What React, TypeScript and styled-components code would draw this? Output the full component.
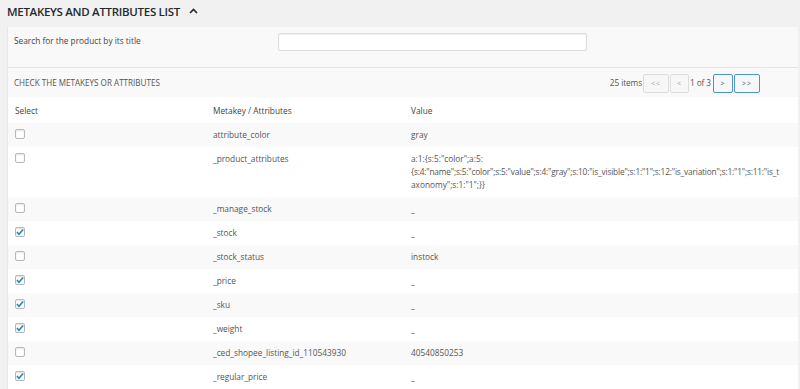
import React from "react"
import styled, { createGlobalStyle } from "styled-components"

type Row = { key: string; value: string[]; checked: boolean }

const rows: Row[] = [
  { key: "attribute_color", value: ["gray"], checked: false },
  {
    key: "_product_attributes",
    value: [
      'a:1:{s:5:"color";a:5:',
      '{s:4:"name";s:5:"color";s:5:"value";s:4:"gray";s:10:"is_visible";s:1:"1";s:12:"is_variation";s:1:"1";s:11:"is_t',
      'axonomy";s:1:"1";}}',
    ],
    checked: false,
  },
  { key: "_manage_stock", value: ["_"], checked: false },
  { key: "_stock", value: ["_"], checked: true },
  { key: "_stock_status", value: ["instock"], checked: false },
  { key: "_price", value: ["_"], checked: true },
  { key: "_sku", value: ["_"], checked: true },
  { key: "_weight", value: ["_"], checked: true },
  { key: "_ced_shopee_listing_id_110543930", value: ["40540850253"], checked: false },
  { key: "_regular_price", value: ["_"], checked: true },
]

const Check = () => (
  <svg width="9" height="8" viewBox="0 0 9 8">
    <path d="M1 4.2 L3.4 6.6 L8 1.2" fill="none" stroke="#1e8cbe" strokeWidth="1.8" />
  </svg>
)

export default function App() {
  return (
    <>
      <GlobalStyle />
      <S.Page>
        <S.Heading>
          METAKEYS AND ATTRIBUTES LIST
          <svg width="9" height="6" viewBox="0 0 9 6">
            <path d="M1 5 L4.5 1.5 L8 5" fill="none" stroke="#23282d" strokeWidth="1.6" />
          </svg>
        </S.Heading>
        <S.Panel>
          <S.SearchRow>
            <S.Label>Search for the product by its title</S.Label>
            <S.Input type="text" />
          </S.SearchRow>
          <S.Toolbar>
            <S.Caption>CHECK THE METAKEYS OR ATTRIBUTES</S.Caption>
            <S.Pager>
              <S.Count>25 items</S.Count>
              <S.PageButton $w={26}>&lt;&lt;</S.PageButton>
              <S.PageButton $w={19}>&lt;</S.PageButton>
              <S.PageInfo>1 of 3</S.PageInfo>
              <S.PageButton $w={20} $active>&gt;</S.PageButton>
              <S.PageButton $w={26} $active>&gt;&gt;</S.PageButton>
            </S.Pager>
          </S.Toolbar>
          <S.Table>
            <colgroup>
              <col style={{ width: 198 }} />
              <col style={{ width: 198 }} />
              <col />
            </colgroup>
            <thead>
              <tr>
                <S.Th>Select</S.Th>
                <S.Th>Metakey / Attributes</S.Th>
                <S.Th>Value</S.Th>
              </tr>
            </thead>
            <tbody>
              {rows.map((r, i) => (
                <S.Tr key={r.key} $alt={i % 2 === 0}>
                  <S.Td>
                    <S.Box>{r.checked && <Check />}</S.Box>
                  </S.Td>
                  <S.Td>{r.key}</S.Td>
                  <S.Td>
                    {r.value.map((line) => (
                      <S.Line key={line} $long={line.length > 60}>
                        {line}
                      </S.Line>
                    ))}
                  </S.Td>
                </S.Tr>
              ))}
            </tbody>
          </S.Table>
        </S.Panel>
      </S.Page>
    </>
  )
}

const GlobalStyle = createGlobalStyle`
  body {
    margin: 0;
    background: #f1f1f1;
    font-family: "Open Sans", "Noto Sans", sans-serif;
    color: #444;
  }
`

const S = {
  Page: styled.div`
    padding: 0 2px 0 7px;
    height: 389px;
    overflow: hidden;
  `,
  Heading: styled.h2`
    margin: 0;
    height: 27px;
    display: flex;
    align-items: center;
    gap: 9px;
    font-size: 11.5px;
    letter-spacing: -0.3px;
    font-weight: 600;
    color: #23282d;
    padding-bottom: 4px;
    box-sizing: border-box;
    svg {
      margin-top: -2px;
    }
  `,
  Panel: styled.div`
    background: #fff;
    border-left: 1px solid #e8e8e8;
  `,
  SearchRow: styled.div`
    display: flex;
    align-items: flex-start;
    height: 40px;
    background: #f9f9f9;
    padding: 0 6px;
  `,
  Label: styled.div`
    width: 264px;
    font-size: 8.3px;
    line-height: 14px;
    padding-top: 7px;
    color: #444;
  `,
  Input: styled.input`
    margin: 6px 0 0 0;
    width: 309px;
    height: 18px;
    box-sizing: border-box;
    border: 1px solid #ddd;
    border-radius: 2px;
    background: #fff;
    box-shadow: inset 0 1px 2px rgba(0, 0, 0, 0.07);
  `,
  Toolbar: styled.div`
    display: flex;
    align-items: center;
    justify-content: space-between;
    height: 30px;
    border-top: 1px solid #e5e5e5;
    background: #f9f9f9;
    padding: 0 38px 0 6px;
    box-sizing: border-box;
  `,
  Caption: styled.div`
    font-size: 8.1px;
    color: #555;
  `,
  Pager: styled.div`
    display: flex;
    align-items: center;
    font-size: 8.3px;
    color: #555;
  `,
  Count: styled.span`
    margin-right: 1px;
    letter-spacing: -0.1px;
  `,
  PageInfo: styled.span`
    margin: 0 0 0 1px;
    width: 23px;
    white-space: nowrap;
    letter-spacing: -0.1px;
  `,
  PageButton: styled.span<{ $w: number; $active?: boolean }>`
    display: flex;
    align-items: center;
    justify-content: center;
    width: ${({ $w }) => $w}px;
    height: 19px;
    margin-top: 2px;
    box-sizing: border-box;
    border: 1px solid ${({ $active }) => ($active ? "#4f94c6" : "#ddd")};
    border-radius: 2px;
    background: #f7f7f7;
    color: ${({ $active }) => ($active ? "#2a5f86" : "#a0a5aa")};
    font-size: 7px;
    letter-spacing: 1px;
    & + & {
      margin-left: 1px;
    }
  `,
  Table: styled.table`
    width: 100%;
    border-collapse: collapse;
    table-layout: fixed;
  `,
  Th: styled.th`
    text-align: left;
    font-weight: 400;
    font-size: 8.3px;
    color: #444;
    height: 26px;
    padding: 0 7px;
    background: #fff;
  `,
  Tr: styled.tr<{ $alt: boolean }>`
    background: ${({ $alt }) => ($alt ? "#f9f9f9" : "#fff")};
  `,
  Td: styled.td`
    vertical-align: top;
    font-size: 8.3px;
    line-height: 13px;
    color: #555;
    padding: 5px 7px 6px 7px;
    height: 13px;
    white-space: nowrap;
    overflow: hidden;
  `,
  Line: styled.div<{ $long: boolean }>`
    letter-spacing: ${({ $long }) => ($long ? "-0.17px" : "0")};
  `,
  Box: styled.div`
    width: 10px;
    height: 10px;
    margin-top: 1px;
    box-sizing: border-box;
    border: 1px solid #b4b9be;
    border-radius: 2px;
    background: #fff;
    display: flex;
    align-items: center;
    justify-content: center;
    box-shadow: inset 0 1px 2px rgba(0, 0, 0, 0.1);
  `,
}
